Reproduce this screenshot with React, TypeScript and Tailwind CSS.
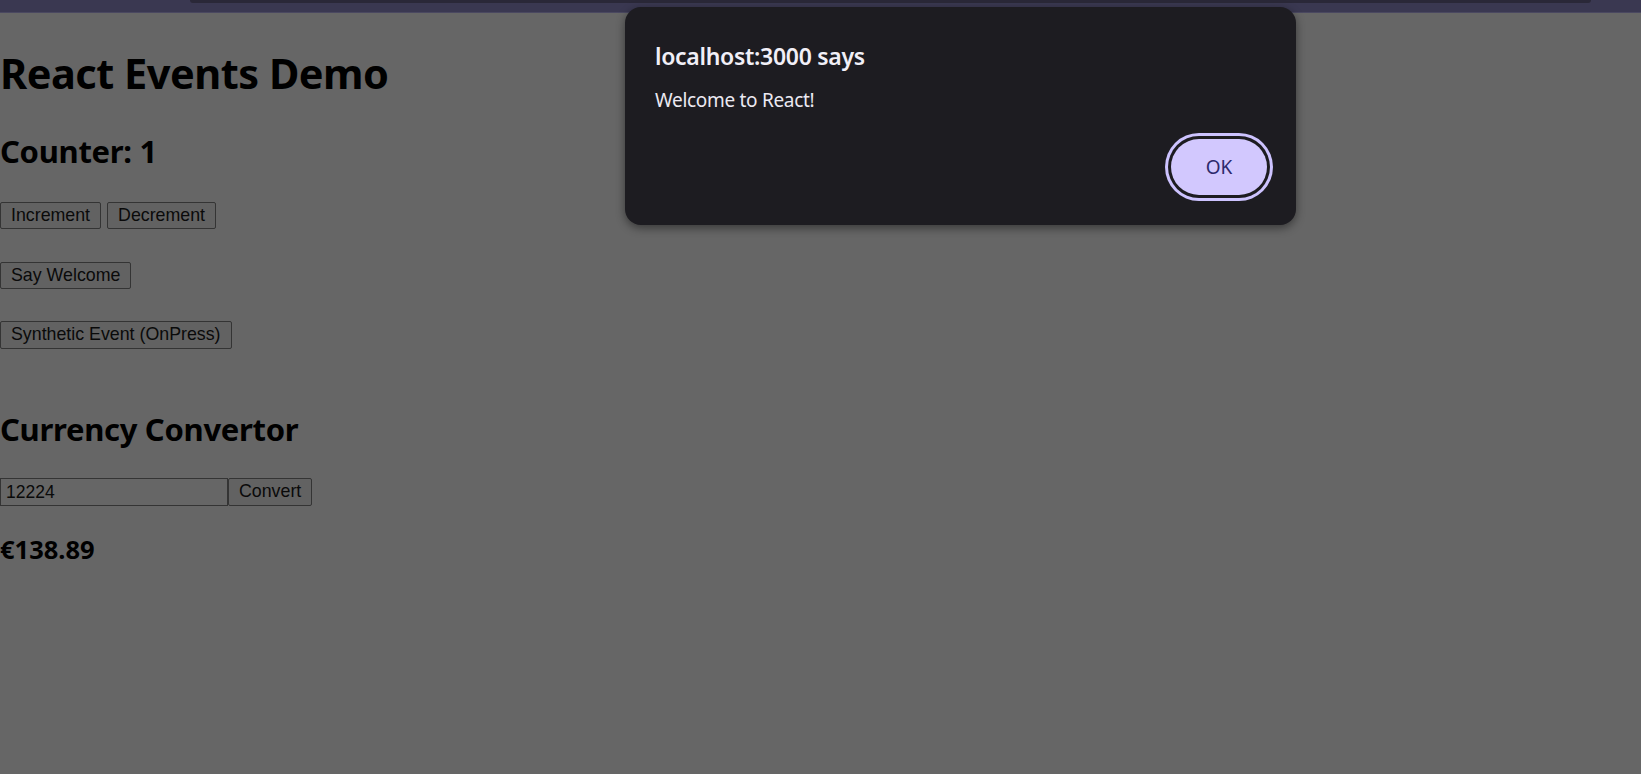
import React, { useState } from "react";

const btn =
  "px-[10px] border border-[#343434] rounded-[2px] bg-[#626262] text-[#0a0a0a] text-[17.8px] leading-none font-['Liberation_Sans',Arial,sans-serif]";

const App: React.FC = () => {
  const [count, setCount] = useState(1);
  const [amount, setAmount] = useState("12224");

  return (
    <div className="relative min-h-[774px] w-full bg-[#666666] font-['Noto_Sans',sans-serif] text-black overflow-hidden">
      {/* browser chrome strip */}
      <div className="h-[13px] bg-[#3a3851] border-b border-[#4a4860]">
        <div className="ml-[190px] mr-[50px] h-[3px] rounded-b-[6px] bg-[#2a2838]" />
      </div>

      <div>
        <h1 className="mt-[34px] text-[41.5px] leading-[52px] font-bold tracking-[-0.5px]">React Events Demo</h1>
        <h2 className="mt-[33px] text-[31px] leading-[38px] font-bold tracking-[-0.3px]">Counter: {count}</h2>

        <div className="mt-[32px] flex gap-[6px]">
          <button className={btn + " h-[27px]"} onClick={() => setCount((c) => c + 1)}>
            Increment
          </button>
          <button className={btn + " h-[27px]"} onClick={() => setCount((c) => c - 1)}>
            Decrement
          </button>
        </div>

        <div className="mt-[33px]">
          <button className={btn + " h-[27px]"}>Say Welcome</button>
        </div>

        <div className="mt-[32px]">
          <button className={btn + " h-[28px]"}>Synthetic Event (OnPress)</button>
        </div>

        <h2 className="mt-[61px] text-[31px] leading-[38px] font-bold tracking-[-0.3px]">Currency Convertor</h2>

        <div className="mt-[30px] flex">
          <input
            value={amount}
            onChange={(e) => setAmount(e.target.value)}
            className="h-[28px] w-[228px] px-[5px] border border-[#343434] bg-[#666666] text-[17.5px] text-[#0a0a0a] font-['Liberation_Sans',Arial,sans-serif] outline-none"
          />
          <button className={btn + " h-[28px]"}>Convert</button>
        </div>

        <h3 className="mt-[27px] text-[25.5px] leading-[32px] font-bold">€138.89</h3>
      </div>

      {/* alert dialog */}
      <div className="absolute left-[625px] top-[7px] w-[671px] h-[218px] rounded-[16px] bg-[#1d1c21] shadow-[0_3px_10px_rgba(0,0,0,0.45)] pl-[30px] pr-[23px] pt-[34px] flex flex-col">
        <div className="text-[23px] leading-[30px] font-semibold text-[#f1eff7] tracking-[-0.3px]">localhost:3000 says</div>
        <div className="mt-[17px] text-[19px] leading-[24px] text-[#ebe9f2] tracking-[-0.3px]">Welcome to React!</div>
        <div className="mt-auto mb-[30px] flex justify-end">
          <button className="w-[96px] h-[56px] mr-[6px] rounded-full bg-[#d2c8fe] text-[#2c2a6c] text-[19px] ring-[3px] ring-[#cdc3ff] ring-offset-[3px] ring-offset-[#1d1c21]">
            OK
          </button>
        </div>
      </div>
    </div>
  );
};

export default App;
